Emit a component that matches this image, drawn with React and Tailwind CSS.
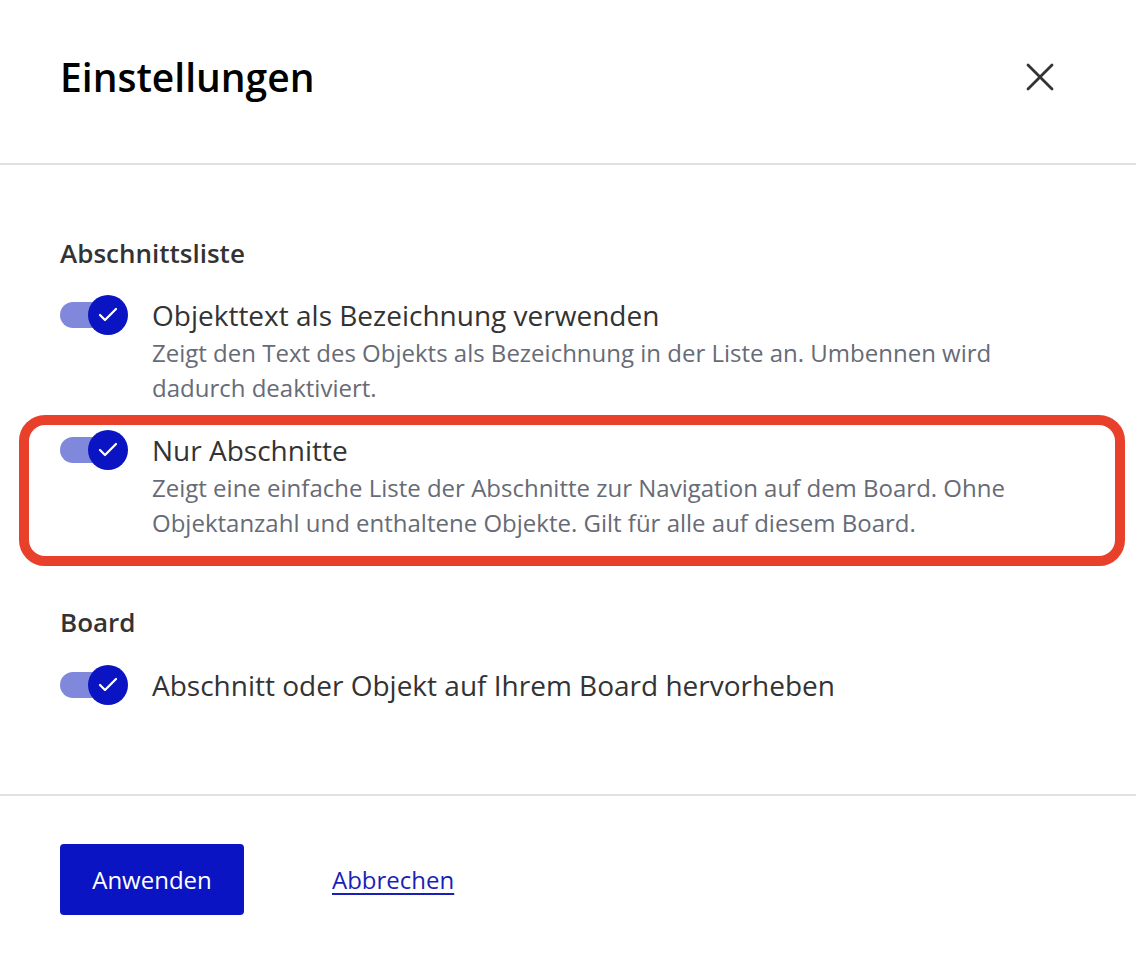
import { Check, X } from "lucide-react";

function Toggle() {
  return (
    <div className="relative h-10 w-[68px] shrink-0 flex items-center">
      <div className="h-[26px] w-[50px] rounded-full bg-[#8088dc]" />
      <div className="absolute left-[28px] top-0 flex h-10 w-10 items-center justify-center rounded-full bg-[#0a14c2]">
        <Check size={24} strokeWidth={2.25} className="text-white" />
      </div>
    </div>
  );
}

function SettingRow({ label, description }) {
  return (
    <div className="flex items-start gap-6">
      <Toggle />
      <div>
        <div className="text-[28px] leading-[40px] text-[#333333]">{label}</div>
        {description && (
          <p className="mt-px text-[24px] leading-[34.5px] text-[#676b76] pr-12">{description}</p>
        )}
      </div>
    </div>
  );
}

export default function App() {
  return (
    <div
      className="min-h-screen w-full bg-white"
      style={{ fontFamily: '"Open Sans", "Noto Sans", sans-serif' }}
    >
      {/* header */}
      <div className="flex items-center justify-between border-b-2 border-[#e1e1e1] pl-[60px] pr-[72px] pt-[53px] pb-[62px]">
        <h1 className="text-[39px] leading-[48px] font-semibold text-black">Einstellungen</h1>
        <button className="text-[#333]">
          <X size={48} strokeWidth={1.4} />
        </button>
      </div>

      {/* body */}
      <div className="pt-[72px] pb-[89px]">
        <div className="px-[60px]">
          <h2 className="text-[26px] leading-[32px] font-semibold text-[#333333] mb-[26px]">
            Abschnittsliste
          </h2>
          <SettingRow
            label="Objekttext als Bezeichnung verwenden"
            description="Zeigt den Text des Objekts als Bezeichnung in der Liste an. Umbennen wird dadurch deaktiviert."
          />
        </div>

        <div className="relative mt-[25px]">
          <div className="absolute left-[19px] right-[11px] top-[-15px] bottom-[-26px] rounded-[26px] border-[10px] border-[#e8402a] pointer-events-none" />
          <div className="px-[60px]">
            <SettingRow
              label="Nur Abschnitte"
              description="Zeigt eine einfache Liste der Abschnitte zur Navigation auf dem Board. Ohne Objektanzahl und enthaltene Objekte. Gilt für alle auf diesem Board."
            />
          </div>
        </div>

        <div className="px-[60px] mt-[66px]">
          <h2 className="text-[26px] leading-[32px] font-semibold text-[#333333] mb-[27px]">Board</h2>
          <SettingRow label="Abschnitt oder Objekt auf Ihrem Board hervorheben" />
        </div>
      </div>

      {/* footer */}
      <div className="flex items-center gap-[88px] border-t-2 border-[#e1e1e1] px-[60px] pt-[48px] pb-[43px]">
        <button className="h-[71px] w-[184px] rounded bg-[#0a14c2] text-[24px] text-white">
          Anwenden
        </button>
        <a href="#" className="text-[24px] text-[#1a1fb8] underline underline-offset-4">
          Abbrechen
        </a>
      </div>
    </div>
  );
}
